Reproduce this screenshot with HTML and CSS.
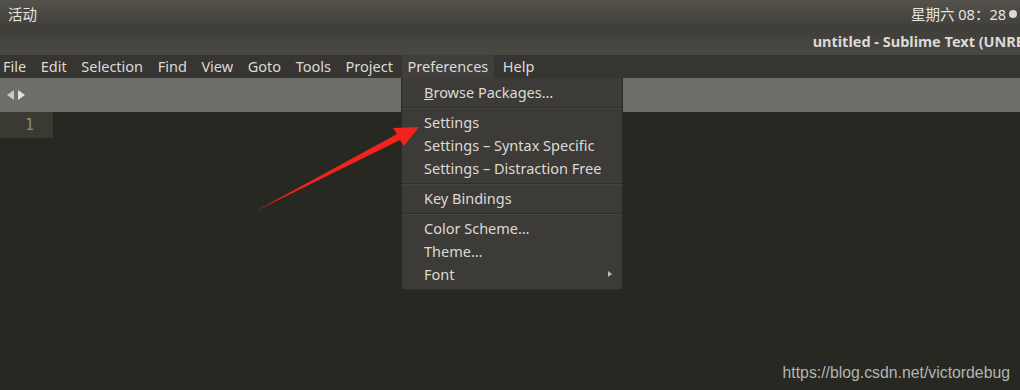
FILE: index.html
```html
<!DOCTYPE html>
<html lang="zh">
	<head>
		<meta charset="utf-8">
		<title>untitled - Sublime Text</title>
		<link rel="stylesheet" href="styles.css">
	</head>
	<body>

		<div class="panel">
			<div class="activities">活动</div>
			<div class="clock">星期六 08：28 <span class="dot"></span></div>
		</div>

		<div class="titlebar"><span class="title">untitled - Sublime Text (UNRE</span></div>

		<div class="menubar">
			<span class="menu-item">File</span>
			<span class="menu-item">Edit</span>
			<span class="menu-item">Selection</span>
			<span class="menu-item">Find</span>
			<span class="menu-item">View</span>
			<span class="menu-item">Goto</span>
			<span class="menu-item">Tools</span>
			<span class="menu-item">Project</span>
			<span class="menu-item active">Preferences</span>
			<span class="menu-item">Help</span>
		</div>

		<div class="tabbar">
			<span class="nav-arrow left"></span>
			<span class="nav-arrow right"></span>
		</div>

		<div class="editor">
			<div class="line">
				<div class="gutter">1</div>
			</div>
			<div class="watermark">https://blog.csdn.net/victordebug</div>
		</div>

		<div class="dropdown">
			<div class="entry"><u>B</u>rowse Packages…</div>
			<div class="sep"></div>
			<div class="entry">Settings</div>
			<div class="entry">Settings – Syntax Specific</div>
			<div class="entry">Settings – Distraction Free</div>
			<div class="sep"></div>
			<div class="entry">Key Bindings</div>
			<div class="sep"></div>
			<div class="entry">Color Scheme…</div>
			<div class="entry">Theme…</div>
			<div class="entry submenu">Font</div>
		</div>

		<svg class="annotation" width="1020" height="390" viewBox="0 0 1020 390">
			<polygon points="252,213 397,134 393,128 419,127 404,146 400,140" fill="#f2231c"/>
		</svg>

	</body>
</html>
```

FILE: styles.css
```css
html, body {

	margin: 0;

	width: 100%;
	height: 100%;

	overflow: hidden;

	font-family: "Noto Sans", "Noto Sans CJK SC", sans-serif;
	font-size: 14.5px;

	background-color: #272822;

}

body {

	display: flex;
	flex-direction: column;

	position: relative;

}

.panel {

	height: 27px;

	display: flex;
	align-items: center;
	justify-content: space-between;

	padding: 0 3px 0 8px;

	background: linear-gradient( #55524c, #403f3a );
	color: #e6e4df;

}

.clock {

	display: flex;
	align-items: center;
	gap: 3px;

}

.dot {

	width: 8px;
	height: 8px;

	border-radius: 50%;

	background-color: #dcdad5;

}

.titlebar {

	height: 28px;

	display: flex;
	align-items: center;
	justify-content: flex-end;

	white-space: nowrap;
	overflow: hidden;

	background: linear-gradient( #3e3d39, #4a4843 );
	color: #dcdad5;

	font-weight: bold;

}

.title {

	margin-right: -4px;

}

.menubar {

	height: 23px;

	display: flex;
	align-items: flex-end;

	background-color: #363531;
	color: #dcdad5;

}

.menu-item {

	height: 23px;
	line-height: 22px;

	padding: 0 6px;
	margin-right: 2.6px;

}

.menu-item:first-child {

	padding-left: 3px;

}

.menu-item.active {

	background-color: #413f3b;
	border-radius: 3px 3px 0 0;

}

.tabbar {

	height: 34px;

	display: flex;
	align-items: center;
	gap: 4px;

	padding-left: 7px;

	background-color: #6e6e68;

}

.nav-arrow {

	width: 0;
	height: 0;

	border-top: 5px solid transparent;
	border-bottom: 5px solid transparent;

}

.nav-arrow.left {

	border-right: 7px solid #c8c8c4;

}

.nav-arrow.right {

	border-left: 7px solid #e2e2df;

}

.editor {

	flex: 1;

	display: flex;
	flex-direction: column;
	justify-content: space-between;

}

.line {

	height: 26px;

}

.gutter {

	width: 53px;
	height: 26px;

	box-sizing: border-box;
	padding-right: 19px;

	text-align: right;
	line-height: 26px;

	background-color: #3b3a32;
	color: #8c8a7e;

	font-family: "DejaVu Sans Mono", monospace;
	font-size: 15px;

}

.watermark {

	align-self: flex-end;

	padding: 0 10px 8px 0;

	color: #b4b4b2;

	font-family: "Liberation Sans", Arial, sans-serif;
	font-size: 15.8px;

}

.dropdown {

	position: absolute;
	top: 78px;
	left: 401px;

	width: 222px;

	box-sizing: border-box;
	padding: 3px 0;

	background-color: #3d3b37;
	border: 1px solid #2c2b28;
	border-top: none;

	color: #dcdad5;

}

.entry {

	position: relative;

	height: 23px;
	line-height: 23px;

	padding-left: 22px;

	white-space: nowrap;

}

.entry.submenu::after {

	content: "";

	position: absolute;
	right: 10px;
	top: 8px;

	border-top: 3px solid transparent;
	border-bottom: 3px solid transparent;
	border-left: 4px solid #bdbbb6;

}

.sep {

	height: 7px;

	background: linear-gradient( transparent 3px, #2f2e2b 3px, #2f2e2b 4px, #45433f 4px, #45433f 5px, transparent 5px );

}

.annotation {

	position: absolute;
	top: 0;
	left: 0;

	pointer-events: none;

}
```
